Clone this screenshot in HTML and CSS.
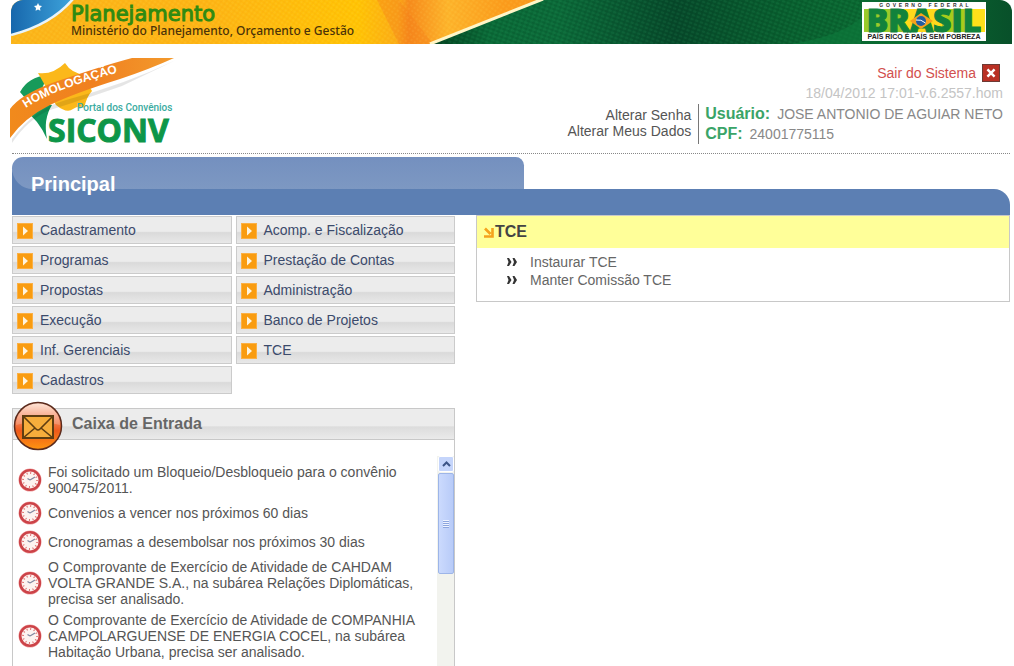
FILE: index.html
```html
<!DOCTYPE html>
<html lang="pt-BR">
<head>
<meta charset="utf-8">
<title>SICONV - Portal dos Convênios</title>
<link rel="stylesheet" href="styles.css">
</head>
<body>
<svg class="defs" aria-hidden="true">
  <defs>
    <linearGradient id="redball" x1="0" y1="0" x2="0" y2="1">
      <stop offset="0" stop-color="#ffe2d2"/><stop offset=".35" stop-color="#f58a62"/><stop offset=".6" stop-color="#ee5a1c"/><stop offset="1" stop-color="#ff9410"/>
    </linearGradient>
    <symbol id="play" viewBox="0 0 16 16">
      <rect width="16" height="16" fill="#f99c10"/>
      <rect x=".5" y=".5" width="15" height="15" fill="none" stroke="#fbb044"/>
      <path d="M6 3.500 11 8 6 12.500z" fill="#fff4dc"/>
    </symbol>
    <symbol id="clock" viewBox="0 0 24 24">
      <circle cx="12" cy="12" r="11.500" fill="#f3a9a9"/>
      <circle cx="12" cy="12" r="9.800" fill="#fdf3f0" stroke="#cc4348" stroke-width="2.600"/>
      <circle cx="12" cy="12" r="7" fill="none" stroke="#dc6a6a" stroke-width="1.800" stroke-dasharray="1 2.665"/>
      <path d="M12 12 17 9M12 12 9.500 10.500" stroke="#8088a0" stroke-width="1.300"/>
    </symbol>
    <symbol id="chevrons" viewBox="0 0 10 8">
      <path d="M0 0h2l2.500 4L2 8H0l1.500-4zM5.500 0h2L10 4 7.500 8h-2L7 4z" fill="#333"/>
    </symbol>
  </defs>
</svg>

<div class="banner">
  <svg class="banner-art" viewBox="0 0 1001 44" preserveAspectRatio="xMidYMin slice" aria-hidden="true">
    <defs>
      <linearGradient id="gold"><stop offset="0" stop-color="#fbb61a"/><stop offset=".35" stop-color="#fdb515"/><stop offset=".62" stop-color="#ffc404"/><stop offset=".69" stop-color="#fbad18"/><stop offset=".71" stop-color="#f68a1c"/><stop offset=".78" stop-color="#fdb52c"/><stop offset=".88" stop-color="#fb9c1c"/><stop offset="1" stop-color="#f7941d"/></linearGradient>
      <linearGradient id="green"><stop offset="0" stop-color="#03401f"/><stop offset=".1" stop-color="#0a6b38"/><stop offset=".22" stop-color="#0b6a39"/><stop offset=".42" stop-color="#06482a"/><stop offset=".62" stop-color="#08602f"/><stop offset=".82" stop-color="#0b6f33"/><stop offset="1" stop-color="#08502a"/></linearGradient>
      <pattern id="weave" width="5" height="4" patternUnits="userSpaceOnUse" patternTransform="rotate(20)"><path d="M0 1h3" stroke="#2c9a5c" stroke-opacity=".3"/><path d="M2 3h3" stroke="#02331a" stroke-opacity=".3"/></pattern>
      <pattern id="thread" width="4" height="4" patternUnits="userSpaceOnUse" patternTransform="rotate(35)"><path d="M0 1h2" stroke="#f58a10" stroke-opacity=".2"/><path d="M2 3h2" stroke="#ffe070" stroke-opacity=".2"/></pattern>
      <linearGradient id="sky" x1="0" x2="1"><stop offset="0" stop-color="#1767ac"/><stop offset="1" stop-color="#3ea4dc"/></linearGradient>
    </defs>
    <rect width="560" height="44" fill="url(#gold)"/>
    <path d="M366 0h22l34 44h-34z" fill="#f57f1c" opacity=".4"/>
    <rect width="560" height="44" fill="url(#thread)"/>
    <path d="M420 44 532 0h469v44z" fill="url(#green)"/>
    <path d="M420 44 532 0h320v44z" fill="url(#weave)"/>
    <path d="M780 44q50-8 70-26v26z" fill="#0d7a3c" opacity=".6"/>
    <path d="M419 44 532-1" stroke="#fff6c8" stroke-width="3"/>
    <path d="M0 35V0h62Q40 25 0 35z" fill="url(#sky)"/>
    <path d="M0 35Q40 25 62-1" fill="none" stroke="#e8f4fa" stroke-width="2.500"/>
    <path d="m27 3 1.200 2.500 2.800.5-2 2 .4 2.800-2.400-1.300-2.400 1.300.4-2.800-2-2 2.800-.5z" fill="#fff"/>
  </svg>
  <div class="ministry">
    <span class="ministry-name">Planejamento</span>
    <span class="ministry-full">Ministério do Planejamento, Orçamento e Gestão</span>
  </div>
  <svg class="brasil" viewBox="0 0 124 39" role="img" aria-label="Governo Federal - Brasil">
    <rect width="124" height="39" fill="#fff"/>
    <rect x="2" y="7" width="38" height="23" fill="#9acb2a"/>
    <rect x="40" y="7" width="40" height="23" fill="#ffd91a"/>
    <rect x="80" y="7" width="24" height="23" fill="#a6cc1c"/>
    <rect x="104" y="7" width="19" height="23" fill="#ffe01a"/>
    <text class="brasil-word" x="62" y="30" text-anchor="middle">BRASIL</text>
    <path d="M48 19 59 11l12 8-12 8z" fill="#f7a21c"/>
    <circle cx="59" cy="19" r="5" fill="#245ca0"/>
    <path d="M54 18q5-1 9.500 3" fill="none" stroke="#fff"/>
    <text class="brasil-small" x="62" y="5" text-anchor="middle">G&#160; O&#160; V&#160; E&#160; R&#160; N&#160; O&#160;&#160; &#160; F&#160; E&#160; D&#160; E&#160; R&#160; A&#160; L</text>
    <text class="brasil-motto" x="62" y="37" text-anchor="middle">PAÍS RICO É PAÍS SEM POBREZA</text>
  </svg>
</div>

<header class="header">
  <svg class="logo" viewBox="0 0 166 92" role="img" aria-label="SICONV - Portal dos Convênios - Homologação">
    <defs><linearGradient id="ribbon"><stop offset="0" stop-color="#f18a1c"/><stop offset=".5" stop-color="#f08020"/><stop offset="1" stop-color="#f39a2c"/></linearGradient></defs>
    <path d="M10 35q8-15 28-17L22 54q-3-9-12-19z" fill="#179a5a"/>
    <path d="M14 53q14-6 28-5-9 14-5 34Q28 62 14 53z" fill="#12965a"/>
    <path d="M28 13q15 2 27-10 6 10 20 12 1 6 7 16-5 5-8 17-5-3-11 1-6 5-17-4z" fill="#fbb81a" transform="translate(0 3)"/>
    <path d="M2 82Q24 52 56 43 116 27 166 3L112 29Q60 47 40 53 18 62 2 86z" fill="#000" opacity=".1"/>
    <path d="M0 52Q10 38 42 26 92 9 122 1L164 1Q140 12 110 22 62 37 40 48 14 61 0 81z" fill="url(#ribbon)"/>
    <path id="ribbonline" d="M16 51Q45 31 114 14" fill="none"/>
    <text class="logo-ribbon"><textPath href="#ribbonline">HOMOLOGAÇÃO</textPath></text>
    <text class="logo-sub" x="67" y="54">Portal dos Convênios</text>
    <text class="logo-name" x="38" y="85">SICONV</text>
  </svg>
  <div class="session">
    <div class="session-exit">
      <a href="#">Sair do Sistema</a>
      <button type="button" class="close" aria-label="Sair"><svg viewBox="0 0 18 18"><path d="M5 5l8 8m0-8-8 8" stroke="#fff" stroke-width="2.800"/></svg></button>
    </div>
    <div class="version">18/04/2012 17:01-v.6.2557.hom</div>
    <div class="account">
      <nav class="account-links"><a href="#">Alterar Senha</a><a href="#">Alterar Meus Dados</a></nav>
      <dl class="user">
        <div><dt>Usuário:</dt><dd>JOSE ANTONIO DE AGUIAR NETO</dd></div>
        <div><dt>CPF:</dt><dd>24001775115</dd></div>
      </dl>
    </div>
  </div>
</header>

<div class="title">
  <div class="title-strip"></div>
  <h1>Principal</h1>
</div>

<main class="main">
  <div class="left">
    <nav class="menu">
      <a href="#"><svg><use href="#play"/></svg>Cadastramento</a>
      <a href="#"><svg><use href="#play"/></svg>Programas</a>
      <a href="#"><svg><use href="#play"/></svg>Propostas</a>
      <a href="#"><svg><use href="#play"/></svg>Execução</a>
      <a href="#"><svg><use href="#play"/></svg>Inf. Gerenciais</a>
      <a href="#"><svg><use href="#play"/></svg>Cadastros</a>
      <a href="#"><svg><use href="#play"/></svg>Acomp. e Fiscalização</a>
      <a href="#"><svg><use href="#play"/></svg>Prestação de Contas</a>
      <a href="#"><svg><use href="#play"/></svg>Administração</a>
      <a href="#"><svg><use href="#play"/></svg>Banco de Projetos</a>
      <a href="#"><svg><use href="#play"/></svg>TCE</a>
    </nav>
    <section class="inbox">
      <h2>Caixa de Entrada</h2>
      <svg class="mail" viewBox="0 0 50 50" aria-hidden="true">
        <circle cx="25" cy="25" r="23.500" fill="url(#redball)" stroke="#5a2a1c" stroke-width="1.500"/>
        <path d="M3 24a22 21 0 0 1 44 0q-22-7-44 0z" fill="#fff" opacity=".2"/>
        <rect x="10" y="15" width="30" height="22" fill="#f7ad3c" stroke="#5e3d12" stroke-width="2"/>
        <path d="m10 15 13 13q2 2 4 0l13-13M10 37l12-10M40 37 28 27" fill="none" stroke="#5e3d12" stroke-width="1.600"/>
      </svg>
      <div class="inbox-body">
        <ul>
          <li><svg><use href="#clock"/></svg><span>Foi solicitado um Bloqueio/Desbloqueio para o convênio 900475/2011.</span></li>
          <li><svg><use href="#clock"/></svg><span>Convenios a vencer nos próximos 60 dias</span></li>
          <li><svg><use href="#clock"/></svg><span>Cronogramas a desembolsar nos próximos 30 dias</span></li>
          <li><svg><use href="#clock"/></svg><span>O Comprovante de Exercício de Atividade de CAHDAM VOLTA GRANDE S.A., na subárea Relações Diplomáticas, precisa ser analisado.</span></li>
          <li><svg><use href="#clock"/></svg><span>O Comprovante de Exercício de Atividade de COMPANHIA CAMPOLARGUENSE DE ENERGIA COCEL, na subárea Habitação Urbana, precisa ser analisado.</span></li>
        </ul>
        <div class="scroll">
          <button type="button" class="scroll-up" aria-label="Rolar para cima"><svg viewBox="0 0 9 6"><path d="m1 5 3.500-3.500L8 5" fill="none" stroke="#3c5486" stroke-width="2"/></svg></button>
          <div class="scroll-thumb"><span class="grip"></span></div>
        </div>
      </div>
    </section>
  </div>
  <section class="panel">
    <h2><svg viewBox="0 0 11 11" aria-hidden="true"><path d="M2 1.500 7.500 7M9.500 1v8.500H1" fill="none" stroke="#f5a21c" stroke-width="2.600"/></svg>TCE</h2>
    <ul>
      <li><svg><use href="#chevrons"/></svg><a href="#">Instaurar TCE</a></li>
      <li><svg><use href="#chevrons"/></svg><a href="#">Manter Comissão TCE</a></li>
    </ul>
  </section>
</main>
</body>
</html>
```
FILE: styles.css
```css
* { box-sizing: border-box; }
body {
  margin: 0;
  padding: 0 4px 0 12px;
  height: 100vh;
  display: flex;
  flex-direction: column;
  overflow: hidden;
  background: #fff;
  color: #555;
  font: 14px/16px "Liberation Sans", Arial, sans-serif;
}
a { color: inherit; text-decoration: none; }
ul, dl, dd, h1, h2 { margin: 0; padding: 0; list-style: none; }
button { padding: 0; border: 0; }
svg { display: block; flex: none; }
.defs { position: absolute; width: 0; height: 0; }

.banner {
  position: relative;
  flex: none;
  height: 44px;
  margin: 0 -2px 0 -1px;
  display: flex;
  justify-content: space-between;
  overflow: hidden;
  border-radius: 12px 12px 0 0;
  isolation: isolate;
}
.banner-art { position: absolute; inset: 0; width: 100%; height: 100%; z-index: -1; }
.ministry { display: flex; flex-direction: column; padding: 4px 0 0 60px; }
.ministry-name { font: 21px/20px "DejaVu Sans", sans-serif; color: #2f8a12; -webkit-text-stroke: 1px #2f8a12; }
.ministry-full { font: 500 12px/14px "Noto Sans", sans-serif; color: #4a3208; }
.brasil { width: 124px; height: 39px; margin: 2px 26px 0 0; }
.brasil-word { font: 800 32px "Open Sans", sans-serif; fill: #12823c; stroke: #12823c; }
.brasil-small { font: bold 5px "Liberation Sans", sans-serif; fill: #333; white-space: pre; }
.brasil-motto { font: bold 7px "Liberation Sans", sans-serif; fill: #222; }

.header {
  flex: none;
  display: flex;
  justify-content: space-between;
  height: 110px;
  margin-bottom: 3px;
  padding: 13px 10px 0 0;
  border-bottom: 1px dotted #888;
}
.logo { width: 166px; height: 92px; margin-left: -2px; }
.logo-ribbon { font: bold 12px "Liberation Sans", sans-serif; fill: #fff; }
.logo-sub { font: 500 10px "Roboto", sans-serif; fill: #3aaba0; }
.logo-name { font: bold 32px "Open Sans", sans-serif; fill: #0d9648; stroke: #0d9648; }
.session { display: flex; flex-direction: column; align-items: flex-end; padding-top: 6px; }
.session-exit { display: flex; align-items: center; gap: 6px; color: #d2504e; height: 20px; }
.close { width: 18px; height: 18px; background: #b93024; border: 1px solid #6d3a34; }
.version { color: #c4c4c4; line-height: 20px; margin-right: -3px; }
.account { display: flex; margin: 1px -3px 0 0; }
.account-links { display: flex; flex-direction: column; text-align: right; padding: 3px 7px 4px 0; border-right: 1px solid #777; }
.user { padding-left: 6px; color: #888; }
.user div { display: flex; align-items: baseline; gap: 7px; line-height: 20px; }
.user dt { font-size: 16px; font-weight: bold; color: #3aa468; }

.title { flex: none; display: grid; grid-template: 32px 26px / 512fr 486fr; }
.title-strip { grid-area: 2 / 1 / 3 / 3; background: #5c7fb3; border-radius: 0 16px 0 0; }
.title h1 {
  grid-area: 1 / 1 / 3 / 2;
  position: relative;
  isolation: isolate;
  padding: 14px 19px;
  font-size: 20px;
  line-height: 26px;
  color: #fff;
}
.title h1::before, .title h1::after {
  content: "";
  position: absolute;
  inset: 0 0 26px;
  z-index: -1;
  border-radius: 16px 12px 0 30px;
  background: linear-gradient(#7490bf, #7d98c2);
}
.title h1::before { background: #5c7fb3; border-radius: 16px 12px 0 0; }

.main { flex: 1; min-height: 0; display: grid; grid-template-columns: 443fr 534fr; column-gap: 21px; align-items: start; }
.left { display: flex; flex-direction: column; height: 100%; padding-top: 1px; gap: 14px; min-height: 0; }
.menu { flex: none; display: grid; grid-template: repeat(6, 28px) / 1fr 1fr; grid-auto-flow: column; gap: 2px 4px; }
.menu a {
  display: flex;
  align-items: center;
  gap: 7px;
  padding-left: 4px;
  color: #3b4a6b;
  border: 1px solid #cbcbcb;
  background: linear-gradient(#ececec 0 55%, #dadada 60%, #e8e8e8);
}
.menu svg { width: 16px; height: 16px; margin-top: 2px; }

.inbox { position: relative; flex: 1; min-height: 0; display: flex; flex-direction: column; border: 1px solid #c8c8c8; border-bottom: 0; }
.inbox h2 {
  flex: none;
  padding-left: 59px;
  font-size: 16px;
  line-height: 30px;
  color: #666;
  background: linear-gradient(#ececec 0 55%, #dcdcdc 60%, #eaeaea);
  border-bottom: 1px solid #c8c8c8;
}
.mail { position: absolute; left: 0; top: -8px; width: 50px; height: 50px; }
.inbox-body { flex: 1; min-height: 0; display: flex; justify-content: space-between; padding-top: 16px; }
.inbox ul { flex: 1; display: flex; flex-direction: column; gap: 5px; padding: 8px 10px 0 5px; }
.inbox li { display: flex; align-items: center; gap: 6px; min-height: 24px; }
.inbox li svg { width: 24px; height: 24px; }
.scroll { flex: none; width: 17px; padding-left: 1px; background: #f2f3ee; display: flex; flex-direction: column; gap: 1px; }
.scroll-up { height: 16px; border: 1px solid #fff; border-radius: 2px; background: #c5d5fb; display: grid; place-items: center; }
.scroll-up svg { width: 9px; height: 6px; }
.scroll-thumb { height: 101px; border: 1px solid #9db5e8; border-radius: 2px; background: linear-gradient(90deg, #cbdafd, #b8cbf8); display: grid; place-items: center; }
.grip { width: 6px; height: 8px; background: repeating-linear-gradient(#eef3ff 0 1px, #8ca5de 1px 2px); }

.panel { border: 1px solid #c8c8c8; }
.panel h2 { display: flex; align-items: center; gap: 1px; padding-left: 6px; font-size: 16px; line-height: 32px; color: #444; background: #ffff99; }
.panel h2 svg { width: 11px; height: 11px; }
.panel ul { padding: 5px 30px 12px; color: #666; }
.panel li { display: flex; align-items: center; gap: 13px; line-height: 18px; }
.panel li svg { width: 10px; height: 8px; }
```
